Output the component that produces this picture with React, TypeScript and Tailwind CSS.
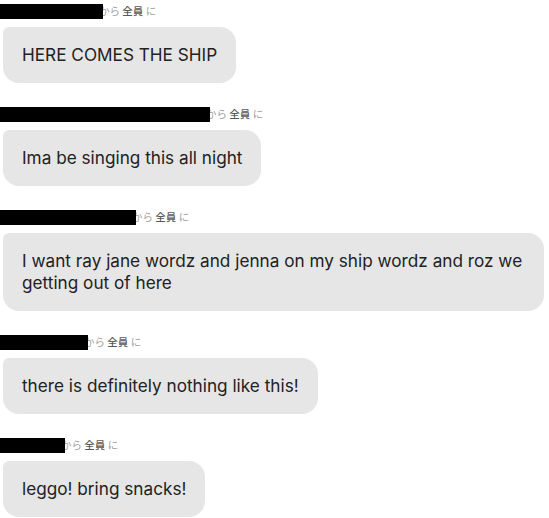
import React from 'react';

type Message = {
  barWidth: number;
  text: string;
};

const messages: Message[] = [
  { barWidth: 103, text: 'HERE COMES THE SHIP' },
  { barWidth: 210, text: 'Ima be singing this all night' },
  { barWidth: 136, text: 'I want ray jane wordz and jenna on my ship wordz and roz we getting out of here' },
  { barWidth: 88, text: 'there is definitely nothing like this!' },
  { barWidth: 65, text: 'leggo! bring snacks!' },
];

const Header: React.FC<{ barWidth: number }> = ({ barWidth }) => (
  <div className="flex items-center h-[16px] mb-[8px]">
    {/* redacted sender name */}
    <div className="relative z-10 h-[15px] bg-black shrink-0" style={{ width: barWidth }} />
    <span className="ml-[-4px] text-[10.5px] leading-[16px] text-[#a0a0a0] whitespace-nowrap font-['Noto_Sans_CJK_JP',sans-serif]">
      から <span className="text-[#5a5a5a] font-medium">全員</span> に
    </span>
  </div>
);

const App: React.FC = () => {
  return (
    <div className="w-[549px] min-h-[518px] bg-white pt-[3px] pl-[3px] pr-[5px] font-['Inter',sans-serif]">
      <div className="flex flex-col gap-[23.5px]">
        {messages.map((m, i) => (
          <div key={i} className="flex flex-col items-start -ml-[3px]">
            <Header barWidth={m.barWidth} />
            <div className="ml-[3px] max-w-[541px] bg-[#e6e6e6] rounded-[16px] rounded-tl-[6px] px-[19px] py-[16.75px] text-[17.2px] leading-[22px] text-[#222222]">
              {m.text}
            </div>
          </div>
        ))}
      </div>
    </div>
  );
};

export default App;
